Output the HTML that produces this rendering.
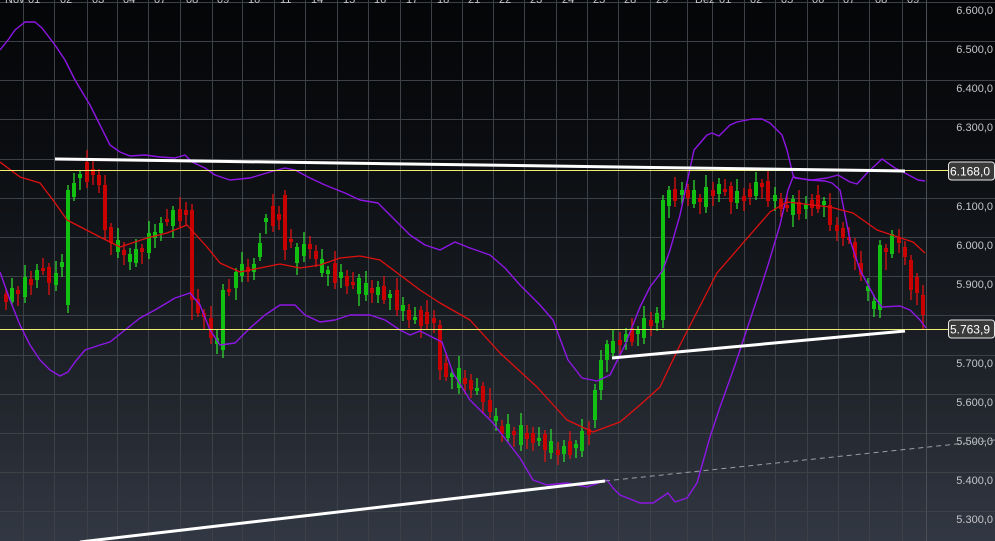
<!DOCTYPE html>
<html><head><meta charset="utf-8"><style>
html,body{margin:0;padding:0;background:#000;}
#c{width:995px;height:541px;position:relative;overflow:hidden;background:linear-gradient(#040507 0%,#0a0c0f 25%,#161a1f 55%,#252a32 80%,#323843 100%);}
svg{position:absolute;left:0;top:0;font-family:"Liberation Sans",sans-serif;}
</style></head><body><div id="c">
<svg width="995" height="541" viewBox="0 0 995 541" xmlns="http://www.w3.org/2000/svg">
<g stroke="#3c4047" stroke-width="1">
<path d="M23.5 0V541M54.5 0V541M87.5 0V541M117.5 0V541M148.5 0V541M180.5 0V541M212.5 0V541M242.5 0V541M274.5 0V541M305.5 0V541M337.5 0V541M368.5 0V541M400.5 0V541M431.5 0V541M462.5 0V541M493.5 0V541M524.5 0V541M556.5 0V541M587.5 0V541M618.5 0V541M650.5 0V541M687.5 0V541M712.5 0V541M744.5 0V541M775.5 0V541M807.5 0V541M838.5 0V541M869.5 0V541M902.5 0V541"/>
<path d="M0 2.5H995M0 41.5H995M0 80.5H995M0 119.5H995M0 159.5H995M0 198.5H995M0 237.5H995M0 276.5H995M0 315.5H995M0 355.5H995M0 394.5H995M0 433.5H995M0 472.5H995M0 511.5H995"/>
</g>
<path d="M926.5 0V541" stroke="#4a4e55" stroke-width="1"/>
<g fill="#c4c6ca" font-size="11" text-anchor="end">
<text x="993" y="14">6.600,0</text><text x="993" y="53">6.500,0</text><text x="993" y="92">6.400,0</text><text x="993" y="131">6.300,0</text><text x="993" y="171">6.200,0</text><text x="993" y="210">6.100,0</text><text x="993" y="249">6.000,0</text><text x="993" y="288">5.900,0</text><text x="993" y="327">5.800,0</text><text x="993" y="367">5.700,0</text><text x="993" y="406">5.600,0</text><text x="993" y="445">5.500,0</text><text x="993" y="484">5.400,0</text><text x="993" y="523">5.300,0</text>
</g>
<g fill="#c4c6ca" font-size="11">
<text x="5" y="3">Nov</text><text x="28" y="3">01</text><text x="60" y="3">02</text><text x="92" y="3">03</text><text x="123" y="3">04</text><text x="154" y="3">07</text><text x="186" y="3">08</text><text x="217" y="3">09</text><text x="248" y="3">10</text><text x="280" y="3">11</text><text x="311" y="3">14</text><text x="343" y="3">15</text><text x="374" y="3">16</text><text x="406" y="3">17</text><text x="437" y="3">18</text><text x="468" y="3">21</text><text x="499" y="3">22</text><text x="530" y="3">23</text><text x="562" y="3">24</text><text x="593" y="3">25</text><text x="624" y="3">28</text><text x="656" y="3">29</text><text x="695" y="3">Dez</text><text x="719" y="3">01</text><text x="750" y="3">02</text><text x="781" y="3">05</text><text x="812" y="3">06</text><text x="843" y="3">07</text><text x="875" y="3">08</text><text x="907" y="3">09</text>
</g>
<!-- green wicks -->
<path stroke="#2ee82e" stroke-width="1.2" fill="none" d="M12 278V306M25 265V303M37 264V288M56 261V291M62 254V277M68 185V313M74 173V201M80 170V190M118 228V258M130 248V270M136 239V267M149 221V259M155 224V248M161 217V241M173 206V238M217 330V354M223 284V358M236 268V300M242 252V282M254 258V280M260 233V261M266 214V234M297 243V275M304 232V262M322 249V277M328 266V286M341 264V288M359 274V306M366 271V301M378 281V303M390 290V310M403 297V321M415 307V324M452 369V389M459 356V394M477 378V395M496 408V431M508 414V442M521 413V451M539 427V446M551 429V459M564 440V462M576 440V458M582 419V457M595 384V428M601 350V400M607 340V372M613 329V359M626 328V350M638 326V346M644 306V344M657 307V331M663 195V328M669 186V218M682 182V205M694 180V208M706 175V213M719 178V202M737 179V209M756 172V200M775 187V211M793 195V227M806 196V219M824 197V217M868 278V301M874 295V317M880 240V318M892 230V258"/>
<!-- green bodies -->
<path fill="#12c012" d="M10 288h4v14h-4zM23 277h4v20h-4zM35 270h4v10h-4zM54 273h4v12h-4zM60 262h4v5h-4zM66 190h4v115h-4zM72 183h4v14h-4zM78 174h4v4h-4zM116 240h4v12h-4zM128 254h4v8h-4zM134 249h4v14h-4zM147 233h4v20h-4zM153 232h4v6h-4zM159 223h4v10h-4zM171 210h4v16h-4zM215 338h4v6h-4zM221 290h4v60h-4zM234 272h4v16h-4zM240 264h4v12h-4zM252 264h4v8h-4zM258 243h4v14h-4zM264 218h4v4h-4zM295 247h4v16h-4zM302 244h4v12h-4zM320 259h4v14h-4zM326 270h4v4h-4zM339 272h4v6h-4zM357 278h4v16h-4zM364 283h4v12h-4zM376 287h4v8h-4zM388 294h4v4h-4zM401 305h4v6h-4zM413 317h4v3h-4zM450 373h4v4h-4zM457 368h4v20h-4zM475 388h4v3h-4zM494 416h4v5h-4zM506 424h4v14h-4zM519 425h4v20h-4zM537 438h4v3h-4zM549 441h4v12h-4zM562 446h4v8h-4zM574 444h4v4h-4zM580 431h4v20h-4zM593 390h4v30h-4zM599 360h4v30h-4zM605 344h4v16h-4zM611 341h4v12h-4zM624 334h4v8h-4zM636 330h4v4h-4zM642 318h4v20h-4zM655 313h4v10h-4zM661 200h4v120h-4zM667 190h4v16h-4zM680 190h4v5h-4zM692 190h4v14h-4zM704 187h4v20h-4zM717 184h4v10h-4zM735 191h4v12h-4zM754 182h4v14h-4zM773 195h4v6h-4zM791 199h4v16h-4zM804 204h4v5h-4zM822 201h4v4h-4zM866 286h4v5h-4zM872 301h4v8h-4zM878 245h4v65h-4zM890 234h4v20h-4z"/>
<!-- red wicks -->
<path stroke="#f01010" stroke-width="1.2" fill="none" d="M6 288V310M18 286V306M31 271V295M43 258V275M49 263V295M87 150V188M93 161V185M99 169V193M105 175V240M111 223V255M124 242V265M142 244V264M167 209V226M180 197V227M186 202V225M192 204V320M198 289V317M204 309V329M211 306V344M229 279V296M248 259V282M273 194V232M279 206V230M285 190V260M291 229V248M310 236V259M316 245V267M335 251V289M347 270V294M353 272V289M372 280V303M384 276V304M397 278V316M409 304V328M421 306V338M427 300V330M434 310V333M440 320V380M446 353V381M465 370V394M471 374V398M483 382V414M490 388V418M502 420V442M514 427V447M527 425V449M533 427V451M545 430V462M558 442V465M570 431V459M589 421V445M620 332V355M632 318V346M651 312V336M675 177V207M688 184V206M700 194V214M713 182V206M725 179V196M731 182V214M744 188V211M750 183V205M762 179V199M768 169V207M781 193V217M787 195V212M799 190V220M812 194V216M818 185V213M830 193V231M837 217V241M843 222V246M849 227V244M855 238V270M861 251V281M886 244V270M899 229V253M905 241V265M911 255V300M917 273V305M923 285V329"/>
<!-- red bodies -->
<path fill="#c80000" d="M4 294h4v8h-4zM16 290h4v4h-4zM29 279h4v6h-4zM41 268h4v3h-4zM47 267h4v16h-4zM85 162h4v20h-4zM91 169h4v6h-4zM97 175h4v10h-4zM103 185h4v45h-4zM109 227h4v16h-4zM122 250h4v5h-4zM140 248h4v4h-4zM165 219h4v3h-4zM178 209h4v12h-4zM184 210h4v5h-4zM190 210h4v90h-4zM196 299h4v14h-4zM202 313h4v4h-4zM209 318h4v20h-4zM227 289h4v3h-4zM246 267h4v5h-4zM271 206h4v20h-4zM277 214h4v6h-4zM283 195h4v55h-4zM289 239h4v3h-4zM308 244h4v5h-4zM314 251h4v8h-4zM333 263h4v20h-4zM345 276h4v10h-4zM351 282h4v3h-4zM370 288h4v5h-4zM382 286h4v14h-4zM395 290h4v20h-4zM407 310h4v10h-4zM419 310h4v16h-4zM425 312h4v12h-4zM432 318h4v5h-4zM438 325h4v45h-4zM444 363h4v14h-4zM463 378h4v6h-4zM469 380h4v10h-4zM481 386h4v16h-4zM488 400h4v12h-4zM500 426h4v8h-4zM512 431h4v4h-4zM525 433h4v6h-4zM531 433h4v10h-4zM543 434h4v16h-4zM556 450h4v5h-4zM568 441h4v14h-4zM587 429h4v6h-4zM618 340h4v5h-4zM630 328h4v14h-4zM649 320h4v6h-4zM673 189h4v12h-4zM686 190h4v8h-4zM698 198h4v4h-4zM711 190h4v6h-4zM723 189h4v3h-4zM729 186h4v16h-4zM742 196h4v5h-4zM748 189h4v8h-4zM760 183h4v4h-4zM766 181h4v20h-4zM779 199h4v10h-4zM785 205h4v3h-4zM797 202h4v12h-4zM810 200h4v8h-4zM816 195h4v14h-4zM828 205h4v20h-4zM835 225h4v6h-4zM841 228h4v10h-4zM847 237h4v3h-4zM853 242h4v16h-4zM859 263h4v12h-4zM884 248h4v4h-4zM897 237h4v6h-4zM903 247h4v10h-4zM909 260h4v30h-4zM915 277h4v16h-4zM921 295h4v20h-4z"/>
<!-- bands -->
<g fill="none" stroke-linejoin="round">
<polyline stroke="#8e16e6" stroke-width="1.4" points="0,50 8,40 15,30 25,22 35,22 42,28 55,45 65,60 75,80 90,105 100,125 110,145 120,152 130,156 145,155 160,157 175,158 185,155 192,162 205,168 215,175 230,180 250,178 270,172 285,168 295,170 310,178 325,185 345,193 360,200 378,203 390,215 400,225 410,235 425,245 440,250 455,242 470,248 490,255 505,268 520,285 540,305 553,320 568,360 582,378 597,381 610,375 625,345 640,307 650,287 663,270 670,250 680,215 694,150 707,135 712,133 719,136 730,125 737,122 752,119 762,119 770,123 782,135 787,150 793,175 795,178 812,180 827,178 838,175 850,182 857,184 868,172 882,159 895,168 905,173 918,180 925,181"/>
<polyline stroke="#8e16e6" stroke-width="1.4" points="0,272 10,300 20,325 30,345 40,360 50,370 60,376 68,372 75,362 85,350 100,345 110,342 125,330 140,318 155,310 175,298 190,293 200,305 210,330 220,345 235,343 250,328 265,315 280,305 295,305 305,315 320,322 335,320 350,315 370,315 385,320 400,330 410,335 420,331 442,342 453,373 470,400 493,423 520,458 533,480 547,485 567,483 587,487 607,480 613,488 620,495 640,503 653,503 668,493 675,502 687,498 697,483 710,437 720,407 735,365 745,335 760,290 768,265 780,225 788,190 793,177 808,180 825,181 832,183 840,190 850,240 860,270 875,298 882,307 900,306 910,310 920,320 926,328"/>
<polyline stroke="#e01010" stroke-width="1.3" points="0,162 20,177 40,183 53,200 67,220 100,237 120,247 147,238 167,233 187,225 207,247 220,263 240,272 260,268 280,264 300,268 320,265 340,258 360,256 380,260 400,275 420,290 440,303 470,320 500,353 537,387 567,420 593,432 620,422 640,405 660,387 680,345 717,273 743,243 770,212 787,202 830,207 853,213 877,230 913,242 925,253"/>
</g>
<line x1="0" y1="170.5" x2="948" y2="170.5" stroke="#f2ee70" stroke-width="1"/>
<line x1="0" y1="329.5" x2="948" y2="329.5" stroke="#f2ee70" stroke-width="1"/>
<line x1="55" y1="159" x2="905" y2="171" stroke="#ffffff" stroke-width="3"/>
<line x1="612" y1="358" x2="905" y2="331" stroke="#ffffff" stroke-width="3"/>
<line x1="80" y1="542" x2="605" y2="481" stroke="#ffffff" stroke-width="3"/>
<line x1="605" y1="481" x2="995" y2="440" stroke="#9a9ea6" stroke-width="1" stroke-dasharray="5,4"/>
<rect x="948.5" y="162" width="46" height="18" rx="3" fill="#3a3a3a" stroke="#e8e8e8" stroke-width="1"/>
<text x="990" y="175.5" fill="#ffffff" font-size="12" text-anchor="end">6.168,0</text>
<rect x="948.5" y="320" width="46" height="18" rx="3" fill="#3a3a3a" stroke="#e8e8e8" stroke-width="1"/>
<text x="990" y="333.5" fill="#ffffff" font-size="12" text-anchor="end">5.763,9</text>
</svg>
</div></body></html>
